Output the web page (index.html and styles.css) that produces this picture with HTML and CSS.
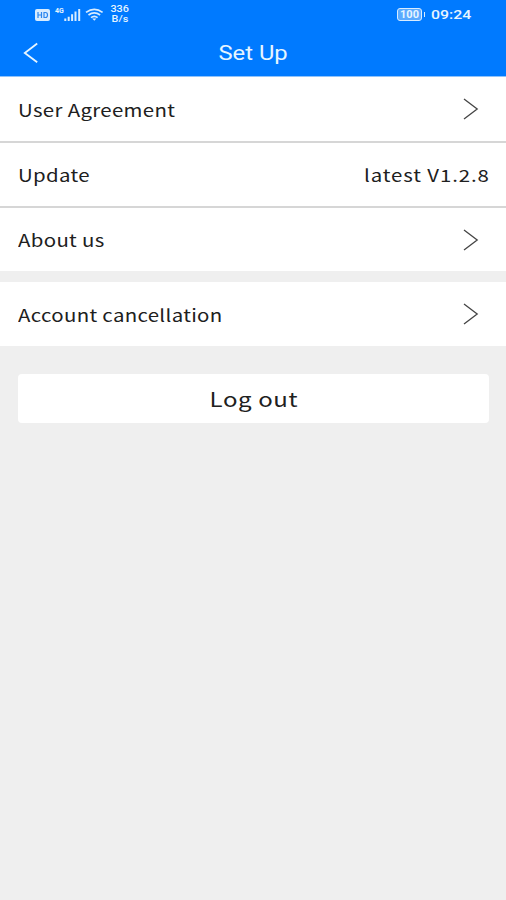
FILE: index.html
```html
<!DOCTYPE html>
<html lang="en">
<head>
<meta charset="utf-8">
<title>Set Up</title>
<link rel="stylesheet" href="styles.css">
</head>
<body>
<header class="header">
  <div class="status">
    <div class="status-left">
      <svg class="hd" width="15" height="12" viewBox="0 0 15 12"><rect width="15" height="12" rx="2" fill="#d8ecff"/><path d="M3 3v6M6.5 3v6M3 6h3.5M9 3.5h1.5q2 0 2 2.5t-2 2.5H9z" fill="none" stroke="#2b86ee" stroke-width="1.2"/></svg>
      <span class="net">4G</span>
      <svg class="signal" width="17" height="13" viewBox="0 0 17 13"><path d="M1.3 10.5V13M4.7 8.7V13M8.1 6.2V13M11.5 3.5V13M15.2 1V13" stroke="#d8ecff" stroke-width="2"/></svg>
      <svg class="wifi" width="19" height="13" viewBox="0 0 19 13"><path d="M1 4.4Q9.3-1.8 17.6 4.4M3.5 7Q9.3 2.7 15.1 7M6 9.6Q9.3 7 12.6 9.6" fill="none" stroke="#d8ecff" stroke-width="1.7"/><path d="M7.2 10.5h4.2L9.3 12.8z" fill="#d8ecff"/></svg>
      <div class="speed"><span>336</span><span>B/s</span></div>
    </div>
    <div class="status-right">
      <div class="battery"><span>100</span></div>
      <i class="battery-tip"></i>
      <span class="clock">09:24</span>
    </div>
  </div>
  <div class="titlebar">
    <svg class="back" width="16" height="22" viewBox="0 0 16 22"><path d="M14.2 1.5L1.8 11l12.4 9.2" fill="none" stroke="#e6f5ff" stroke-width="1.8"/></svg>
    <h1 class="title">Set Up</h1>
  </div>
</header>
<main>
  <section class="group">
    <div class="row"><span class="label">User Agreement</span><svg class="arrow" width="18" height="24" viewBox="0 0 18 24"><path d="M2 2L15.2 12 2 22" /></svg></div>
    <div class="row"><span class="label">Update</span><span class="version">latest V1.2.8</span></div>
    <div class="row"><span class="label">About us</span><svg class="arrow" width="18" height="24" viewBox="0 0 18 24"><path d="M2 2L15.2 12 2 22" /></svg></div>
  </section>
  <section class="group">
    <div class="row"><span class="label">Account cancellation</span><svg class="arrow" width="18" height="24" viewBox="0 0 18 24"><path d="M2 2L15.2 12 2 22" /></svg></div>
  </section>
  <button class="logout"><span>Log out</span></button>
</main>
</body>
</html>
```
FILE: styles.css
```css
* { box-sizing: border-box; }
body { margin: 0; min-height: 900px; background: #efefef; color: #202020; font-family: "Noto Sans CJK SC", "Noto Sans", sans-serif; }
.header { height: 77px; background: #007aff; border-bottom: 1px solid #8fc3fb; color: #e6f5ff; }
.status { height: 28px; display: flex; justify-content: space-between; padding: 0 34px 0 35px; font-family: Roboto, sans-serif; }
.status-left, .status-right { display: flex; align-items: center; }
.hd { margin-top: 1px; }
.net { width: 12px; margin: -7px 0 0 5px; font-size: 7px; font-weight: 700; line-height: 8px; }
.signal { margin-left: -3px; }
.wifi { margin-left: 4px; }
.speed { display: flex; flex-direction: column; align-items: center; width: 20px; margin-left: 6px; font-size: 9px; line-height: 10px; font-weight: 500; }
.speed span { transform: scaleX(1.2); }
.battery { width: 25px; height: 13px; margin-top: 1px; border: 1px solid #d8ecff; border-radius: 3px; background: #5aaaff; text-align: center; font-size: 11px; line-height: 11px; font-weight: 700; }
.battery span { display: block; }
.battery-tip { width: 1px; height: 5px; margin-left: 2px; background: #d8ecff; }
.clock { width: 41px; margin: 1px 0 0 6px; font-size: 13px; font-weight: 500; line-height: 28px; transform: scaleX(1.22); transform-origin: left; }
.titlebar { height: 48px; display: grid; grid-template-columns: 60px 1fr 60px; align-items: center; }
.back { margin-left: 23px; margin-top: 1px; }
.title { justify-self: center; margin: 0; padding-top: 1px; font: 400 20px/48px Roboto, sans-serif; transform: scaleX(1.19); }
.group { background: #fff; margin-bottom: 11px; }
.row { height: 65px; display: flex; align-items: center; justify-content: space-between; padding: 0 16px 0 18px; border-bottom: 2px solid #d6d6d6; }
.row:first-child { height: 66px; }
.row:last-child { height: 63px; border-bottom: 0; }
.row:only-child { height: 64px; }
.label, .version { font-size: 17px; line-height: 30px; white-space: nowrap; }
.label { letter-spacing: 0.28px; transform: scaleX(1.2); transform-origin: left; }
.row:first-child .label { margin-top: 2px; }
.version { letter-spacing: 0.74px; transform: scaleX(1.2); transform-origin: right; }
.arrow { margin-right: 10px; }
.arrow path { fill: none; stroke: #444; stroke-width: 1.3; }
.logout { display: block; width: 471px; height: 49px; margin: 28px 0 0 18px; padding: 1px 0 0; border: 0; border-radius: 4px; background: #fff; color: #202020; font: 400 20px/48px "Noto Sans CJK SC", sans-serif; }
.logout span { display: inline-block; letter-spacing: 0.5px; transform: scaleX(1.2); }
```
